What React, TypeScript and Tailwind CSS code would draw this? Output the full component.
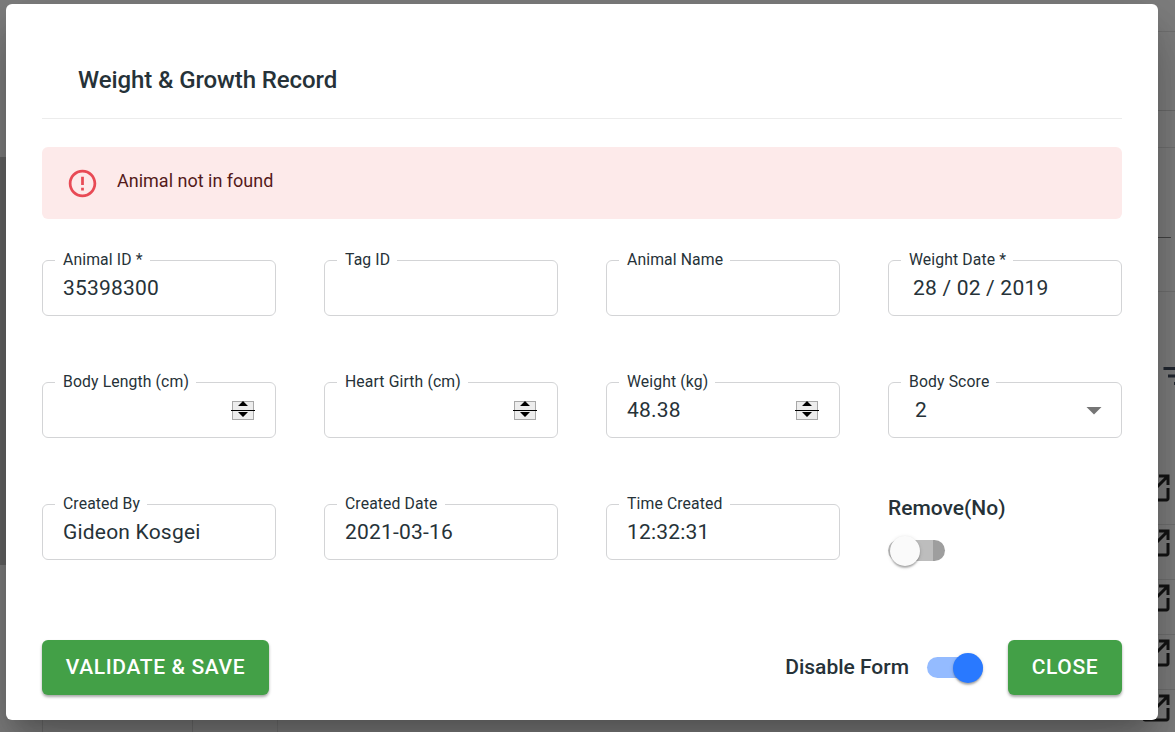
import type { ReactNode } from "react";
import { MdErrorOutline, MdOpenInNew, MdFilterList, MdArrowDropDown } from "react-icons/md";

function Field({ label, value, inset = "pl-5", children }: { label: string; value?: string; inset?: string; children?: ReactNode }) {
  return (
    <div className={`relative flex h-14 items-center justify-between rounded-[6px] border border-[#d3d4d6] pr-5 ${inset}`}>
      <label className="absolute -top-3 left-3 h-[23px] whitespace-nowrap bg-white pl-2 pr-[7px] text-[15.75px] leading-[21px] tracking-[0.12px]">
        {label}
      </label>
      <span className="text-[21px] leading-6 tracking-[0.2px]">{value}</span>
      {children}
    </div>
  );
}

function Stepper() {
  return (
    <svg width="24" height="20" viewBox="0 0 24 20" className="mt-0.5 shrink-0" shapeRendering="crispEdges">
      <rect x="1.5" y="0.5" width="21" height="18" fill="#ededed" stroke="#a8a8a8" />
      <path d="M0 9h24v1H0z" fill="#000" />
      <path d="M12 0l5 5H7zM7 11h10l-5 5z" fill="#000" shapeRendering="auto" />
    </svg>
  );
}

function Backdrop() {
  return (
    <div className="absolute inset-0 flex justify-between">
      <div className="w-1.5 bg-[#7f7f7f]">
        <div className="h-[157px]" />
        <div className="h-[408px] bg-[#656565]" />
      </div>
      <div className="flex flex-1 items-end pl-9">
        <div className="h-4 w-[151px] border-x border-[#707070]" />
        <div className="h-4 w-[85px] border-r border-[#747474]" />
      </div>
      <div className="relative w-[37px]">
        <div className="h-8 border-b border-[#727272]" />
        <div className="h-[79px] border-b border-[#6c6c6c]" />
        <div className="h-[37px] border-b border-[#727272]" />
        <div className="mr-1 h-[90px] border-b border-[#444]" />
        <div className="h-[54px] border-b border-[#727272]" />
        <MdFilterList className="absolute left-[21px] top-[358px] size-9 text-[#222831]" />
        <div className="mt-[178px] flex flex-col">
          {[0, 1, 2, 3, 4].map((row) => (
            <div key={row} className="h-[55px] border-b border-[#727272]">
              <MdOpenInNew className="size-9 text-[#151515]" />
            </div>
          ))}
        </div>
      </div>
    </div>
  );
}

export default function App() {
  return (
    <div className="relative h-[732px] w-[1175px] overflow-hidden bg-[#7f7f7f] pl-1.5 pt-1 font-[Roboto,sans-serif] text-[#263238]">
      <Backdrop />
      <main className="relative flex h-[716px] w-[1152px] flex-col rounded-[6px] bg-white px-9 shadow-[0_16px_22px_-10px_rgba(0,0,0,0.2),0_36px_57px_4px_rgba(0,0,0,0.14),0_14px_69px_12px_rgba(0,0,0,0.12)]">
        <header className="h-[115px] border-b border-[#ececec] px-9 pt-[62px]">
          <h1 className="text-2xl font-medium leading-7 tracking-[-0.09px]">Weight &amp; Growth Record</h1>
        </header>
        <div className="mt-7 flex h-[72px] items-center rounded-[6px] bg-[#fdeaea] pl-6">
          <MdErrorOutline className="size-[33px] text-[#e84a55]" />
          <p className="ml-[18px] pb-1 text-[18px] leading-6 text-[#541a1a]">Animal not in found</p>
        </div>
        <div className="mt-[41px] grid grid-cols-4 gap-x-12 gap-y-[66px]">
          <Field label="Animal ID *" value="35398300" />
          <Field label="Tag ID" />
          <Field label="Animal Name" />
          <Field label="Weight Date *" value="28 / 02 / 2019" inset="pl-6" />
          <Field label="Body Length (cm)"><Stepper /></Field>
          <Field label="Heart Girth (cm)"><Stepper /></Field>
          <Field label="Weight (kg)" value="48.38"><Stepper /></Field>
          <Field label="Body Score" value="2" inset="pl-[26px]">
            <MdArrowDropDown className="-mr-[11px] size-9 text-[#757575]" />
          </Field>
          <Field label="Created By" value="Gideon Kosgei" />
          <Field label="Created Date" value="2021-03-16" />
          <Field label="Time Created" value="12:32:31" />
          <div className="-mt-2 h-16">
            <div className="text-[21px] font-medium leading-6">Remove(No)</div>
            <div className="mt-5 flex h-[21px] w-[57px] items-center rounded-full bg-[linear-gradient(to_right,#bdbdbd_45px,#9e9e9e_45px)]">
              <div className="ml-0.5 size-[30px] shrink-0 rounded-full bg-[#fafafa] shadow-[0_3px_2px_-1px_rgba(0,0,0,0.2),0_1px_2px_rgba(0,0,0,0.14),0_1px_4px_rgba(0,0,0,0.12)]" />
            </div>
          </div>
        </div>
        <footer className="mt-20 flex h-[55px] items-center">
          <button className="h-[55px] w-[227px] rounded-[6px] bg-[#43a047] text-[21px] font-medium tracking-[0.63px] text-white shadow-[0_2px_3px_rgba(0,0,0,0.35)]">VALIDATE &amp; SAVE</button>
          <span className="ml-auto text-[21px] font-medium">Disable Form</span>
          <div className="ml-[18px] mr-[25px] flex h-[21px] w-14 items-center justify-end rounded-full bg-[#94bbff]">
            <div className="size-[30px] shrink-0 rounded-full bg-[#2979ff] shadow-[0_3px_2px_-1px_rgba(0,0,0,0.2),0_1px_2px_rgba(0,0,0,0.14),0_1px_4px_rgba(0,0,0,0.12)]" />
          </div>
          <button className="h-[55px] w-[114px] rounded-[6px] bg-[#43a047] text-[21px] font-medium tracking-[0.63px] text-white shadow-[0_2px_3px_rgba(0,0,0,0.35)]">CLOSE</button>
        </footer>
      </main>
    </div>
  );
}
